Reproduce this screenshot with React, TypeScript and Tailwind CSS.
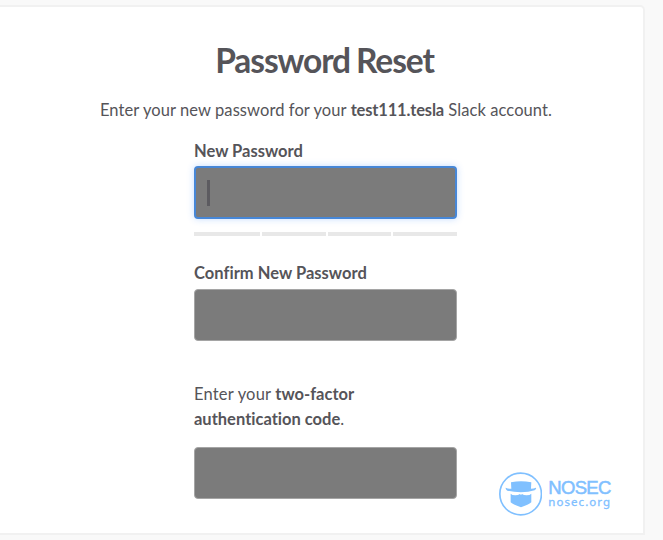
function NosecLogo() {
  return (
    <svg viewBox="27 36 130 132" className="h-[44px] w-[43.3px]" fill="none">
      <circle cx="92" cy="102" r="62.5" stroke="#80c0ff" strokeWidth="5" />
      <path
        d="M63 67 Q79 64 93 64 Q108 64 124 67 L123 86 Q131 86 138 83 Q140 87 134 91 Q116 97 93 97 Q70 97 52 92 Q46 88 47 83 Q54 86 64 86 Z"
        fill="#80c0ff"
      />
      <path
        d="M62 101 Q66 106 76 106 Q85 106 90 102 L93 105 L96 102 Q101 106 110 106 Q120 106 124 101 V127 Q119 133 93 142 Q67 133 62 127 Z"
        fill="#80c0ff"
      />
    </svg>
  )
}

export default function App() {
  return (
    <main className="relative h-[540px] w-[663px] overflow-hidden bg-[#f9f9f9] pt-[5px] font-['Lato',sans-serif] text-[#555459]">
      <div className="h-[530px] w-[645px] rounded-tr-[5px] border-t-2 border-r-2 border-b-2 border-[#f1f1f1] bg-white">
        <div className="flex w-[651px] flex-col items-center pt-[33px]">
          <h1 className="h-[40px] pr-[2px] text-[33.5px] leading-[40px] font-bold tracking-[-1.1px] whitespace-nowrap [word-spacing:-1px]">
            Password Reset
          </h1>
          <p className="mt-[18px] h-[25px] pl-[1px] text-[16.5px] leading-[25px] tracking-[0.08px] whitespace-nowrap">
            Enter your new password for your{' '}
            <strong className="tracking-[-0.16px]">test111.tesla</strong> Slack account.
          </p>

          <form className="flex w-[263px] flex-col pt-4">
            <label className="h-[25px] text-[16.5px] leading-[25px] font-bold">New Password</label>
            <div className="mt-[2px] flex h-[53px] items-center rounded-[4px] border-2 border-[#4787d7] bg-[#7b7b7b] pl-[11px] shadow-[0_0_7px_rgba(60,140,255,0.3)]">
              <span className="h-[26px] w-[3px] bg-[#5c5b60]" />
            </div>
            <div className="mt-[13px] flex gap-[2px]">
              <span className="h-1 w-[66px] bg-[#e8e8e8]" />
              <span className="h-1 flex-1 bg-[#e8e8e8]" />
              <span className="h-1 flex-1 bg-[#e8e8e8]" />
              <span className="h-1 flex-1 bg-[#e8e8e8]" />
            </div>

            <label className="mt-[25px] h-[25px] text-[16.5px] leading-[25px] font-bold tracking-[0.03px]">
              Confirm New Password
            </label>
            <div className="mt-[3px] h-[52px] rounded-[4px] border border-[#a5a5a5] bg-[#7b7b7b]" />

            <p className="mt-[41px] text-[16.5px] leading-[25px] tracking-[0.2px] [font-variant-ligatures:none]">
              Enter your <strong className="tracking-normal">two-factor</strong>
              <br />
              <strong className="tracking-normal">authentication code</strong>.
            </p>
            <div className="mt-[15px] h-[52px] rounded-[4px] border border-[#a5a5a5] bg-[#7b7b7b]" />
          </form>
        </div>
      </div>

      <div className="absolute top-[472px] left-[499px] flex text-[#80c0ff]">
        <NosecLogo />
        <div className="ml-[6px] pt-[7px] whitespace-nowrap">
          <div className="h-[17px] font-['Liberation_Sans',sans-serif] text-[18.5px] leading-[18px] font-normal tracking-[-0.7px] [-webkit-text-stroke:0.5px_#80c0ff]">
            NOSEC
          </div>
          <div className="font-['Noto_Sans',sans-serif] text-[11.5px] leading-[11px] font-normal tracking-[1.05px] [-webkit-text-stroke:0.3px_#80c0ff]">
            nosec.org
          </div>
        </div>
      </div>
    </main>
  )
}
